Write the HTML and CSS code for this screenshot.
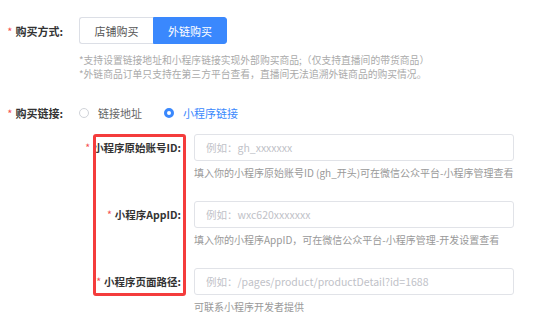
FILE: index.html
```html
<!DOCTYPE html>
<html lang="zh-CN">
<head>
    <meta charset="UTF-8">
    <meta name="viewport" content="width=device-width, initial-scale=1.0">
    <link rel="stylesheet" href="styles.css">
    <title>购买方式</title>
</head>
<body>
    <div class="form">
        <div class="form-row row-type">
            <div class="label"><span class="star">*</span>购买方式:</div>
            <div class="btn-group">
                <button class="btn">店铺购买</button>
                <button class="btn active">外链购买</button>
            </div>
        </div>
        <div class="hint">
            <div>*支持设置链接地址和小程序链接实现外部购买商品;（仅支持直播间的带货商品）</div>
            <div>*外链商品订单只支持在第三方平台查看，直播间无法追溯外链商品的购买情况。</div>
        </div>

        <div class="form-row row-link">
            <div class="label"><span class="star">*</span>购买链接:</div>
            <label class="radio"><span class="dot"></span>链接地址</label>
            <label class="radio checked"><span class="dot"></span>小程序链接</label>
        </div>

        <div class="sub-form">
            <div class="sub-row">
                <div class="sub-label"><span class="star">*</span>小程序原始账号ID:</div>
                <input class="input" placeholder="例如：gh_xxxxxxx">
            </div>
            <div class="help">填入你的小程序原始账号ID (gh_开头)可在微信公众平台-小程序管理查看</div>

            <div class="sub-row">
                <div class="sub-label"><span class="star">*</span>小程序AppID:</div>
                <input class="input" placeholder="例如：wxc620xxxxxxx">
            </div>
            <div class="help">填入你的小程序AppID，可在微信公众平台-小程序管理-开发设置查看</div>

            <div class="sub-row">
                <div class="sub-label"><span class="star">*</span>小程序页面路径:</div>
                <input class="input" placeholder="例如：/pages/product/productDetail?id=1688">
            </div>
            <div class="help">可联系小程序开发者提供</div>

            <div class="mark"></div>
        </div>
    </div>
</body>
</html>
```

FILE: styles.css
```css
body {
    margin: 0;
    font-family: "Noto Sans CJK SC", "Noto Sans", sans-serif;
    color: #333;
    background: #fff;
}

.form {
    padding-top: 17px;
}

.form-row {
    display: flex;
    align-items: center;
}

.label {
    width: 63px;
    margin-right: 16px;
    text-align: right;
    font-size: 11px;
    font-weight: bold;
    white-space: nowrap;
}

.star {
    color: #f5504f;
    margin-right: 3px;
    font-weight: normal;
}

.row-type {
    height: 27px;
}

.btn-group {
    display: flex;
    height: 27px;
}

.btn {
    width: 74px;
    height: 27px;
    padding: 0;
    border: 1px solid #dcdfe6;
    background: #fff;
    color: #555;
    font-family: inherit;
    font-size: 11px;
}

.btn:first-child {
    border-radius: 3px 0 0 3px;
    border-right: none;
}

.btn.active {
    background: #3a88fd;
    border-color: #3a88fd;
    color: #fff;
    border-radius: 0 3px 3px 0;
}

.hint {
    margin: 9px 0 0 79px;
    font-size: 9.8px;
    line-height: 14.2px;
    color: #aaa;
    white-space: nowrap;
}

.row-link {
    margin-top: 22px;
    height: 20px;
}

.radio {
    display: flex;
    align-items: center;
    font-size: 11px;
    color: #666;
    margin-right: 22px;
}

.radio .dot {
    width: 8px;
    height: 8px;
    border: 1px solid #d0d3d9;
    border-radius: 50%;
    margin-right: 9px;
    box-sizing: content-box;
}

.radio.checked {
    color: #3a88fd;
}

.radio.checked .dot {
    width: 4px;
    height: 4px;
    border: 3px solid #3a88fd;
    background: #fff;
}

.sub-form {
    position: relative;
    margin-top: 11px;
}

.sub-row {
    display: flex;
    align-items: center;
    height: 27px;
}

.sub-label {
    width: 181px;
    margin-right: 13px;
    text-align: right;
    font-size: 10.5px;
    font-weight: bold;
    white-space: nowrap;
}

.input {
    width: 320px;
    height: 27px;
    box-sizing: border-box;
    border: 1px solid #e1e3e8;
    border-radius: 3px;
    padding: 0 11px;
    font-family: inherit;
    font-size: 10.5px;
    color: #333;
    outline: none;
}

.input::placeholder {
    color: #bfc2c8;
}

.help {
    margin: 5px 0 21px 194px;
    font-size: 10px;
    line-height: 14px;
    color: #999;
    white-space: nowrap;
}

.mark {
    position: absolute;
    left: 93px;
    top: 0;
    width: 93px;
    height: 162px;
    box-sizing: border-box;
    border: 3px solid #f43c3c;
    border-radius: 3px;
}
```
